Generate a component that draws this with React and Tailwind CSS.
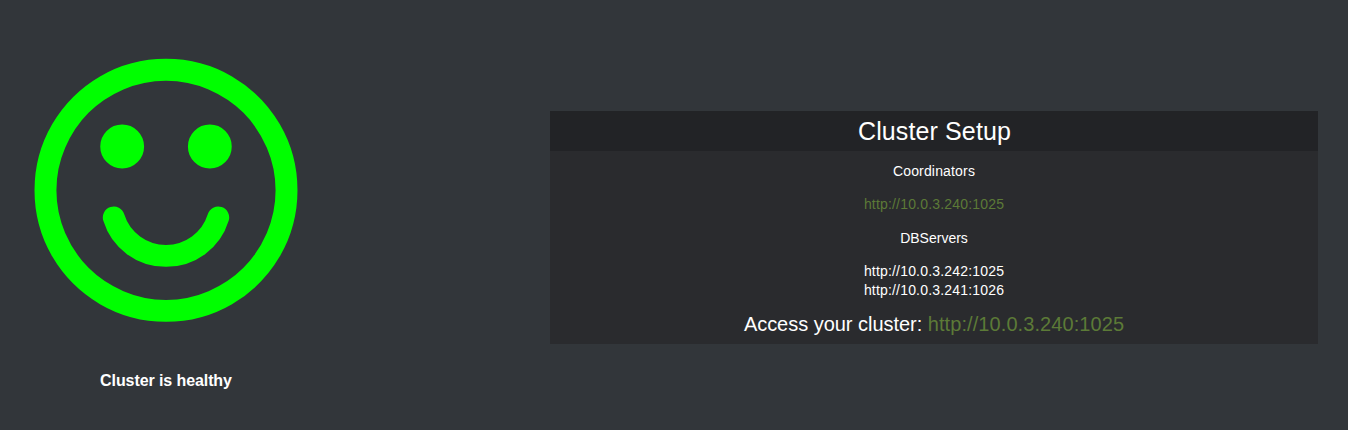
const nodes = ["http://10.0.3.242:1025", "http://10.0.3.241:1026"];

function Smiley() {
  return (
    <svg className="h-[264px] w-[264px]" viewBox="-3 -5 1542 1542" fill="#00ff00">
      <path d="M1134 946q-37 121-138 195t-228 74-228-74-138-195q-8-25 4-48.500t38-31.500q25-8 48.500 4t31.500 38q25 80 92.500 129.500t151.500 49.500 151.500-49.500 92.500-129.500q8-26 32-38t49-4 37 31.500 4 48.500zM640 512q0 53-37.500 90.500t-90.500 37.500-90.500-37.500-37.500-90.500 37.500-90.500 90.500-37.500 90.500 37.500 37.500 90.500zM1152 512q0 53-37.500 90.500t-90.500 37.500-90.500-37.500-37.500-90.500 37.500-90.500 90.500-37.500 90.500 37.500 37.500 90.500zM1408 768q0-130-51-248.500t-136.500-204-204-136.500-248.500-51-248.500 51-204 136.500-136.500 204-51 248.500 51 248.500 136.500 204 204 136.500 248.500 51 248.500-51 204-136.500 136.500-204 51-248.500zM1536 768q0 209-103 385.500t-279.500 279.500-385.500 103-385.500-103-279.500-279.500-103-385.500 103-385.500 279.500-279.500 385.500-103 385.500 103 279.500 279.500 103 385.500z" />
    </svg>
  );
}

export default function App() {
  return (
    <main className="flex h-[430px] items-start overflow-hidden bg-[#32363a] font-['Liberation_Sans',Arial,sans-serif] text-white">
      <section className="ml-[34px] flex w-[264px] flex-col items-center pt-[58px]">
        <Smiley />
        <p className="mt-[47px] text-[16px] leading-[23px] font-bold tracking-[-0.09px]">Cluster is healthy</p>
      </section>
      <section className="mt-[111px] ml-[252px] h-[233px] w-[768px] bg-[#2a2b2e] text-center text-[14px] leading-[19px]">
        <h1 className="h-[40px] bg-[#222326] pl-px text-[25px] leading-[40px] tracking-[0.12px]">Cluster Setup</h1>
        <h2 className="mt-[11px] tracking-[0.17px]">Coordinators</h2>
        <p className="mt-[14px] tracking-[0.18px] text-[#5c7a37]">http://10.0.3.240:1025</p>
        <h2 className="mt-[15px]">DBServers</h2>
        <div className="mt-[14px] tracking-[0.18px]">
          {nodes.map((node) => <p key={node}>{node}</p>)}
        </div>
        <p className="mt-[11px] text-[20px] leading-[27px]">
          <span className="tracking-[-0.03px]">Access your cluster: </span>
          <a className="tracking-[0.08px] text-[#5c7a37]">http://10.0.3.240:1025</a>
        </p>
      </section>
    </main>
  );
}
